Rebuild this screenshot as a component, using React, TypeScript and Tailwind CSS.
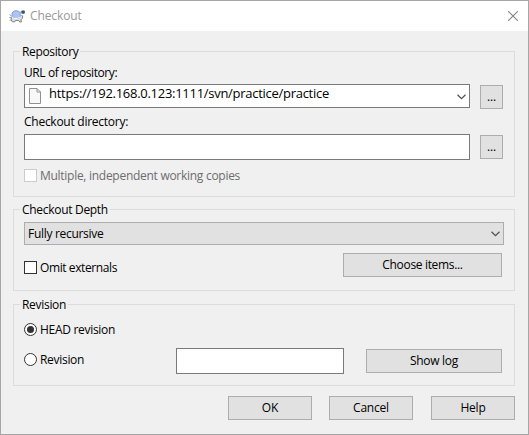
import type { ReactNode } from 'react';

function Group({ title, titleClass, className, children }: { title: string; titleClass: string; className: string; children: ReactNode }) {
  return (
    <section className={`mx-3 flex flex-col border border-[#dcdcdc] ${className}`}>
      <h2 className={`-mt-[9px] ml-[6px] h-[17px] shrink-0 whitespace-nowrap bg-[#f0f0f0] pl-[2px] ${titleClass}`}>{title}</h2>
      {children}
    </section>
  );
}

function Button({ children, className }: { children: ReactNode; className: string }) {
  return (
    <button className={`flex h-6 shrink-0 items-center justify-center whitespace-nowrap border border-[#adadad] bg-[#e1e1e1] pb-px leading-[17px] ${className}`}>
      {children}
    </button>
  );
}

function Dots() {
  return (
    <Button className="w-[23px]">
      <span className="tracking-[-0.1px]">...</span>
    </Button>
  );
}

function Chevron({ className }: { className: string }) {
  return (
    <svg width="9" height="6" viewBox="0 0 9 6" className={className} fill="none" stroke="#505050" strokeWidth="1.2">
      <path d="M.5.8 4.5 4.6 8.5.8" />
    </svg>
  );
}

function Turtle() {
  return (
    <svg width="17" height="13" viewBox="0 0 17 13" fill="none" className="mt-px">
      <path d="M.5 4.5 2.5 6M.3 7.6l2.5-.4M.6 10.6 3 9" stroke="#9a9a9a" />
      <path d="M2.5 7.5 2 9.5l1.2 2.3h2.6l.6-1.4 3.4.2.9 1.4h1.8l-.6-2.2 1.6-1.6.2-2.7" fill="#dedede" stroke="#777" strokeWidth=".9" />
      <ellipse cx="7.2" cy="4.7" rx="4.2" ry="3.9" fill="#a8c6fb" stroke="#7f93c4" strokeWidth=".9" />
      <path d="M3.2 7.2c2 2 5.600 2 8-.6" stroke="#fff" />
      <path d="M11.500 2.500v2.800l2 .4" stroke="#b5b5b5" />
      <rect x="12.300" y=".5" width="3.500" height="3.300" rx=".7" fill="#2f5670" />
      <path d="M12 1.200v1.500" stroke="#8aa0c0" />
    </svg>
  );
}

export default function App() {
  return (
    <main className="flex h-[435px] w-[529px] flex-col overflow-hidden border border-[#a6a6a6] bg-[#f0f0f0] font-['Open_Sans','Noto_Sans',sans-serif] text-[12px] leading-[17px] text-black">
      <header className="flex h-[30px] shrink-0 items-center bg-white pl-2 pr-[10px]">
        <Turtle />
        <h1 className="ml-1 mt-[6px] self-start text-[12px] leading-[17px] tracking-[-0.1px] text-[#999999]">Checkout</h1>
        <svg className="ml-auto -mt-px" width="10" height="10" viewBox="0 0 10 10" stroke="#858585" strokeWidth="1.1">
          <path d="m0 0 10 10m0-10-10 10" />
        </svg>
      </header>

      <Group title="Repository" titleClass="w-[60px] tracking-[-0.35px]" className="mt-5 h-[146px] w-[502px] shrink-0">
        <div className="ml-[10px] mt-1 flex flex-col">
          <label className="tracking-[-0.4px]">URL of repository:</label>
          <div className="mt-[3px] flex gap-[10px]">
            <div className="flex h-6 w-[446px] border border-[#7a7a7a] bg-white pl-1 pr-[3px]">
              <svg className="mt-[3px]" width="12" height="17" viewBox="0 0 12 17" fill="#f8f8f8" stroke="#909090">
                <path d="M.5.5H8L11.5 4v11.5H.5zM8 .5V4h3.5" />
              </svg>
              <span className="-mt-px ml-2 text-[13px] leading-[18px] tracking-[-0.28px]">https://192.168.0.123:1111/svn/practice/practice</span>
              <Chevron className="ml-auto mt-[9px]" />
            </div>
            <div className="mt-px flex"><Dots /></div>
          </div>
          <label className="mt-1 tracking-[-0.26px]">Checkout directory:</label>
          <div className="mt-1 flex items-center gap-[10px]">
            <div className="h-[26px] w-[446px] border border-[#7a7a7a] bg-white" />
            <Dots />
          </div>
          <div className="mt-[9px] flex h-[13px] items-center text-[#6d6d6d]">
            <span className="size-[13px] border border-[#cccccc] bg-white" />
            <span className="ml-[3px] tracking-[-0.28px]">Multiple, independent working copies</span>
          </div>
        </div>
      </Group>

      <Group title="Checkout Depth" titleClass="w-[90px] tracking-[-0.3px]" className="mt-3 h-[82px] w-[502px] shrink-0">
        <div className="ml-[10px] mt-1 flex flex-col">
          <div className="flex h-[23px] w-[480px] items-center border border-[#adadad] bg-[#e1e1e1] pl-[3px] pr-[3px]">
            <span className="tracking-[-0.3px]">Fully recursive</span>
            <Chevron className="ml-auto" />
          </div>
          <div className="mt-2 flex w-[478px]">
            <div className="mt-2 flex h-[13px] items-center">
              <span className="size-[13px] border border-[#333333] bg-white" />
              <span className="ml-[3px] tracking-[-0.4px]">Omit externals</span>
            </div>
            <Button className="ml-auto w-[159px] tracking-[-0.33px]">Choose items...</Button>
          </div>
        </div>
      </Group>

      <Group title="Revision" titleClass="w-[48px] tracking-[-0.3px]" className="mt-[13px] h-[82px] w-[502px] shrink-0">
        <div className="ml-[10px] mt-[10px] flex flex-col">
          <div className="flex h-[13px] items-center">
            <span className="flex size-[13px] items-center justify-center rounded-full border border-[#333333] bg-white">
              <span className="size-[7px] rounded-full bg-[#333333]" />
            </span>
            <span className="ml-[3px] tracking-[-0.3px]">HEAD revision</span>
          </div>
          <div className="mt-3 flex h-[26px] w-[478px] items-center">
            <div className="-mt-[3px] flex h-[13px] w-[152px] items-center">
              <span className="size-[13px] rounded-full border border-[#333333] bg-white" />
              <span className="ml-[3px] tracking-[-0.3px]">Revision</span>
            </div>
            <div className="h-[26px] w-[168px] border border-[#7a7a7a] bg-white" />
            <Button className="ml-auto w-[136px] tracking-[-0.3px]">Show log</Button>
          </div>
        </div>
      </Group>

      <footer className="mt-[10px] flex pl-[227px]">
        <Button className="w-[84px]">OK</Button>
        <Button className="ml-[17px] w-[84px] tracking-[-0.2px]">Cancel</Button>
        <Button className="ml-[18px] w-[84px] tracking-[-0.2px]">Help</Button>
      </footer>
    </main>
  );
}
